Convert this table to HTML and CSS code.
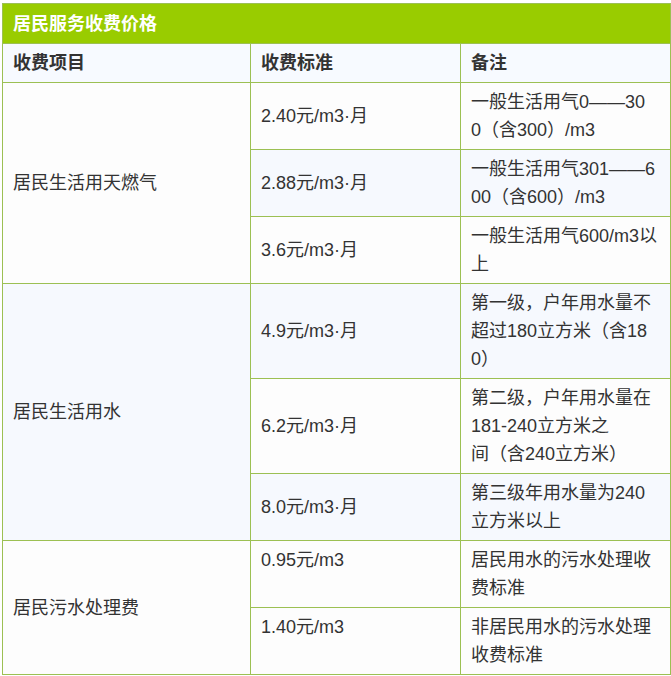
FILE: index.html
```html
<!DOCTYPE html>
<html lang="zh">
<head>
<meta charset="utf-8">
<title>居民服务收费价格</title>
<link rel="stylesheet" href="styles.css">
</head>
<body>
<table class="price">
  <colgroup>
    <col class="c1">
    <col class="c2">
    <col class="c3">
  </colgroup>
  <tr class="title"><th colspan="3">居民服务收费价格</th></tr>
  <tr class="head"><th>收费项目</th><th>收费标准</th><th>备注</th></tr>
  <tr class="w">
    <td rowspan="3">居民生活用天燃气</td>
    <td>2.40元/m3·月</td>
    <td>一般生活用气0——30<br>0（含300）/m3</td>
  </tr>
  <tr class="b">
    <td>2.88元/m3·月</td>
    <td>一般生活用气301——6<br>00（含600）/m3</td>
  </tr>
  <tr class="w">
    <td>3.6元/m3·月</td>
    <td>一般生活用气600/m3以<br>上</td>
  </tr>
  <tr class="b">
    <td rowspan="3">居民生活用水</td>
    <td>4.9元/m3·月</td>
    <td>第一级，户年用水量不<br>超过180立方米（含18<br>0）</td>
  </tr>
  <tr class="w">
    <td>6.2元/m3·月</td>
    <td>第二级，户年用水量在<br>181-240立方米之<br>间（含240立方米）</td>
  </tr>
  <tr class="b">
    <td>8.0元/m3·月</td>
    <td>第三级年用水量为240<br>立方米以上</td>
  </tr>
  <tr class="w">
    <td rowspan="2">居民污水处理费</td>
    <td class="top">0.95元/m3</td>
    <td>居民用水的污水处理收<br>费标准</td>
  </tr>
  <tr class="w">
    <td class="top">1.40元/m3</td>
    <td>非居民用水的污水处理<br>收费标准</td>
  </tr>
</table>
</body>
</html>
```

FILE: styles.css
```css
html, body {
  margin: 0;
  padding: 0;
  background: #ffffff;
}

.price {
  border-collapse: collapse;
  table-layout: fixed;
  width: 668px;
  margin: 3px 0 0 2px;
  font-family: "Liberation Sans", "Noto Sans CJK SC", sans-serif;
  font-size: 18px;
  line-height: 28px;
  color: #333333;
}

.c1 { width: 248px; }
.c2 { width: 210px; }
.c3 { width: 210px; }

.price th,
.price td {
  border: 1px solid #9cc053;
  padding: 5px 10px;
  text-align: left;
  vertical-align: middle;
  white-space: nowrap;
}

.price .title th {
  background: #99cc00;
  color: #ffffff;
  font-weight: bold;
  padding: 6px 10px 5px;
  border-color: #9cc053;
}

.price .head th {
  background: #f7faff;
  font-weight: bold;
  color: #333333;
}

.price tr.w td { background: #fdfdfd; }
.price tr.b td { background: #f6f9fe; }

.price td.top { vertical-align: top; }
```
